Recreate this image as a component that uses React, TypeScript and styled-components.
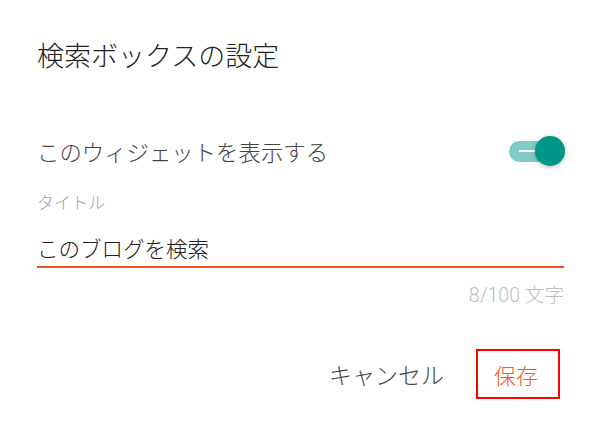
import React, { useState } from "react";
import styled, { createGlobalStyle } from "styled-components";

const GlobalStyle = createGlobalStyle`
  html, body { margin: 0; padding: 0; background: #ffffff; }
  body { font-family: Roboto, "Noto Sans CJK JP", sans-serif; font-weight: 300; }
  * { box-sizing: border-box; }
`;

const Dialog = styled.div`
  width: 600px;
  height: 427px;
  background: #ffffff;
  padding: 41px 36px 0 37px;
  display: flex;
  flex-direction: column;
`;

const Title = styled.h2`
  margin: 0;
  font-size: 27px;
  line-height: 32px;
  font-weight: 300;
  color: #212121;
`;

const ToggleRow = styled.div`
  margin-top: 58px;
  height: 40px;
  display: flex;
  align-items: center;
  justify-content: space-between;
`;

const ToggleLabel = styled.span`
  font-size: 22.4px;
  color: #444444;
`;

const Switch = styled.button<{ $on: boolean }>`
  position: relative;
  width: 56px;
  height: 32px;
  margin-right: -1px;
  padding: 0;
  border: none;
  background: transparent;
  cursor: pointer;
`;

const Track = styled.span<{ $on: boolean }>`
  position: absolute;
  left: 0;
  top: 6px;
  width: 48px;
  height: 21px;
  border-radius: 11px;
  background: ${(p) => (p.$on ? "#80cbc4" : "#bdbdbd")};
  &::after {
    content: "";
    position: absolute;
    left: 10px;
    top: 9px;
    width: 16px;
    height: 2px;
    background: #ffffff;
  }
`;

const Knob = styled.span<{ $on: boolean }>`
  position: absolute;
  top: 1px;
  left: ${(p) => (p.$on ? "26px" : "0px")};
  width: 30px;
  height: 30px;
  border-radius: 50%;
  background: ${(p) => (p.$on ? "#009688" : "#f5f5f5")};
  box-shadow: 0 1px 4px rgba(0, 0, 0, 0.3);
`;

const FieldLabel = styled.label`
  margin-top: 22px;
  font-size: 17px;
  line-height: 20px;
  font-weight: 300;
  color: #a0a0a0;
`;

const Input = styled.input`
  margin-top: 19px;
  width: 100%;
  height: 36px;
  padding: 0 0 4px 0;
  border: none;
  border-bottom: 2px solid #f4511e;
  outline: none;
  font-family: Roboto, "Noto Sans CJK JP", sans-serif;
  font-weight: 300;
  font-size: 21.5px;
  line-height: 30px;
  color: #212121;
  background: transparent;
`;

const Counter = styled.div`
  margin-top: 18px;
  text-align: right;
  font-size: 19.6px;
  line-height: 20px;
  color: #bdbdbd;
`;

const Actions = styled.div`
  margin-top: 43px;
  margin-right: 4px;
  display: flex;
  justify-content: flex-end;
  align-items: center;
  gap: 12px;
`;

const TextButton = styled.button<{ $primary?: boolean }>`
  height: 50px;
  padding: ${(p) => (p.$primary ? "0 20px 0 16px" : "0 18px")};
  background: transparent;
  border: 2px solid ${(p) => (p.$primary ? "#ff0000" : "transparent")};
  font-family: Roboto, "Noto Sans CJK JP", sans-serif;
  font-weight: 300;
  font-size: ${(p) => (p.$primary ? "22px" : "23px")};
  color: ${(p) => (p.$primary ? "#ff5722" : "#444444")};
  cursor: pointer;
`;

export default function App() {
  const [on, setOn] = useState(true);
  const [value, setValue] = useState("このブログを検索");
  return (
    <>
      <GlobalStyle />
      <Dialog>
        <Title>検索ボックスの設定</Title>
        <ToggleRow>
          <ToggleLabel>このウィジェットを表示する</ToggleLabel>
          <Switch $on={on} onClick={() => setOn(!on)} aria-label="toggle">
            <Track $on={on} />
            <Knob $on={on} />
          </Switch>
        </ToggleRow>
        <FieldLabel>タイトル</FieldLabel>
        <Input value={value} onChange={(e) => setValue(e.target.value)} />
        <Counter>{value.length}/100 文字</Counter>
        <Actions>
          <TextButton>キャンセル</TextButton>
          <TextButton $primary>保存</TextButton>
        </Actions>
      </Dialog>
    </>
  );
}
